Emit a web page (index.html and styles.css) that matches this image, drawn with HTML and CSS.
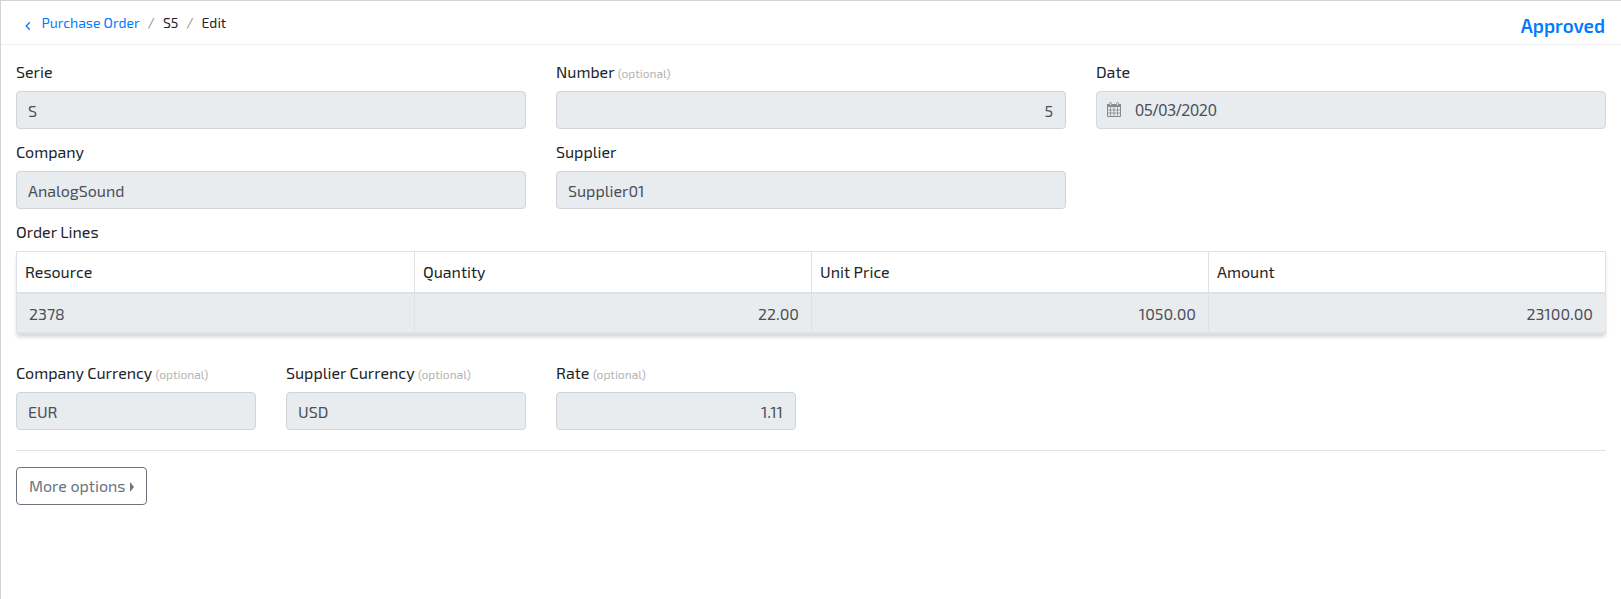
FILE: index.html
```html
<!DOCTYPE html>
<html lang="en">
<head>
<meta charset="utf-8">
<title>Purchase Order S5</title>
<link rel="stylesheet" href="styles.css">
</head>
<body>
<div class="page">
  <header class="topbar">
    <nav class="breadcrumb">
      <svg class="back" viewBox="0 0 6 10" width="6" height="10"><path d="M4.800 1.300 1.200 5l3.600 3.700" fill="none" stroke="currentColor" stroke-width="1.300"/></svg>
      <a class="crumb-link">Purchase Order</a><span class="slash">/</span><span class="crumb-id">S5</span><span class="slash">/</span><span class="crumb-edit">Edit</span>
    </nav>
    <strong class="status">Approved</strong>
  </header>
  <main class="content">
    <div class="row thirds">
      <div class="field"><label>Serie</label><div class="input">S</div></div>
      <div class="field"><label>Number <small>(optional)</small></label><div class="input num">5</div></div>
      <div class="field"><label>Date</label><div class="input date">
        <svg class="calendar" viewBox="0 0 14 15" width="14" height="15" fill="none" stroke="currentColor"><path d="M.5 3v11.500h13V3"/><path d="M0 3.500h14" stroke-width="3"/><path d="M3.500 5v9M7 5v9M10.500 5v9M1 8h12M1 11h12" stroke-width=".8"/><rect x="2.500" y=".5" width="2" height="3" rx="1" fill="#e9ecef"/><rect x="9.500" y=".5" width="2" height="3" rx="1" fill="#e9ecef"/></svg>
        <span>05/03/2020</span></div></div>
    </div>
    <div class="row thirds">
      <div class="field"><label>Company</label><div class="input">AnalogSound</div></div>
      <div class="field"><label>Supplier</label><div class="input">Supplier01</div></div>
    </div>
    <div class="lines">
      <label>Order Lines</label>
      <table class="table">
        <thead><tr><th class="first">Resource</th><th>Quantity</th><th>Unit Price</th><th>Amount</th></tr></thead>
        <tbody><tr><td>2378</td><td class="num">22.00</td><td class="num">1050.00</td><td class="num">23100.00</td></tr></tbody>
      </table>
    </div>
    <div class="row sixths">
      <div class="field"><label>Company Currency <small>(optional)</small></label><div class="input">EUR</div></div>
      <div class="field"><label>Supplier Currency <small>(optional)</small></label><div class="input">USD</div></div>
      <div class="field"><label>Rate <small>(optional)</small></label><div class="input num">1.11</div></div>
    </div>
    <hr class="divider">
    <button class="more"><span>More options</span><i class="caret"></i></button>
  </main>
</div>
</body>
</html>
```
FILE: styles.css
```css
* { box-sizing: border-box; }
body { margin: 0; background: #fff; }
.page {
  height: 599px;
  overflow: hidden;
  border-top: 1px solid #d2d2d2;
  border-left: 1px solid #d2d2d2;
  font: 16px/24px "Exo 2", Roboto, sans-serif;
  color: #212529;
}
.topbar {
  display: flex;
  justify-content: space-between;
  height: 44px;
  padding: 0 16px 0 23px;
  border-bottom: 1px solid #f0f0f0;
}
.breadcrumb { display: flex; align-items: flex-start; padding-top: 11px; font-size: 14px; line-height: 22px; }
.back { margin: 9px 10.5px 0 1px; color: #007bff; }
.crumb-link { color: #007bff; }
.slash { width: 23.3px; text-align: center; color: #868e96; }
.status { padding-top: 12px; font-size: 18.8px; line-height: 26px; font-weight: 600; color: #007bff; }
.content { padding: 15px 15px 0; }
.row { display: grid; column-gap: 30px; }
.thirds { grid-template-columns: repeat(3, 1fr); margin-bottom: 11px; }
.sixths { grid-template-columns: repeat(6, 1fr); }
label { display: block; height: 31px; white-space: nowrap; }
small { font-size: 12px; color: #b4b4b4; }
.input {
  height: 38px;
  padding: 7px 12px 5px 11px;
  border: 1px solid #ced4da;
  border-radius: 4px;
  background: #e9ecef;
  color: #495057;
}
.num { text-align: right; }
.date { display: flex; padding: 6px 10px; border-color: #d5d8da; font-family: "Noto Sans", sans-serif; letter-spacing: -.37px; }
.calendar { margin: 4px 14px 0 0; color: #858a8e; }
.table {
  width: 100%;
  table-layout: fixed;
  border-collapse: collapse;
  box-shadow: 0 4px 4px -1px rgba(0, 0, 0, .17);
}
th, td { border: 1px solid #dee2e6; }
th { height: 41px; padding: 0 8px; border-bottom-width: 2px; font-weight: 400; text-align: left; }
.first { width: 398px; }
td { height: 40px; padding: 2px 12px 0; border-bottom-width: 2px; background: #e9ecef; color: #495057; }
.lines { margin-bottom: 27px; }
.divider { margin: 20px 0 16px; border: 0; border-top: 1px solid #e1e1e1; }
.more {
  display: flex;
  align-items: center;
  width: 131px;
  height: 38px;
  padding: 0 12px;
  border: 1px solid #6c757d;
  border-radius: 4px;
  background: #fff;
  color: #6c757d;
  font: inherit;
  white-space: nowrap;
}
.caret { margin: 2px 0 0 5px; border: 5px solid transparent; border-left: 4px solid #6c757d; border-right: 0; }
```
